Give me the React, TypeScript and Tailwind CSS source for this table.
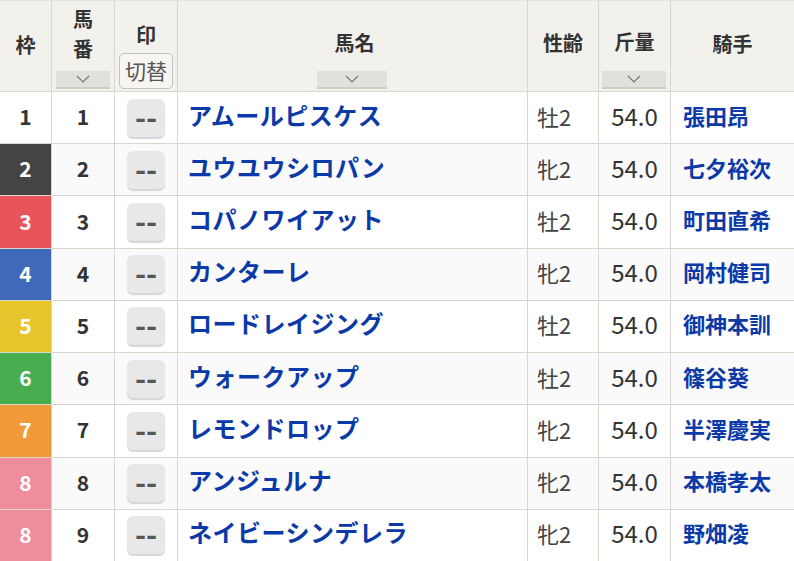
import React from "react";

type Row = { waku: number; uma: number; name: string; sex: string; kin: string; jockey: string };

const rows: Row[] = [
  { waku: 1, uma: 1, name: "アムールピスケス", sex: "牡2", kin: "54.0", jockey: "張田昂" },
  { waku: 2, uma: 2, name: "ユウユウシロパン", sex: "牝2", kin: "54.0", jockey: "七夕裕次" },
  { waku: 3, uma: 3, name: "コパノワイアット", sex: "牡2", kin: "54.0", jockey: "町田直希" },
  { waku: 4, uma: 4, name: "カンターレ", sex: "牝2", kin: "54.0", jockey: "岡村健司" },
  { waku: 5, uma: 5, name: "ロードレイジング", sex: "牡2", kin: "54.0", jockey: "御神本訓" },
  { waku: 6, uma: 6, name: "ウォークアップ", sex: "牡2", kin: "54.0", jockey: "篠谷葵" },
  { waku: 7, uma: 7, name: "レモンドロップ", sex: "牝2", kin: "54.0", jockey: "半澤慶実" },
  { waku: 8, uma: 8, name: "アンジュルナ", sex: "牝2", kin: "54.0", jockey: "本橋孝太" },
  { waku: 8, uma: 9, name: "ネイビーシンデレラ", sex: "牝2", kin: "54.0", jockey: "野畑凌" },
];

const wakuClass: Record<number, string> = {
  1: "bg-white text-[#333]",
  2: "bg-[#444444] text-white",
  3: "bg-[#e9545a] text-white",
  4: "bg-[#4069b9] text-white",
  5: "bg-[#e8c42d] text-white",
  6: "bg-[#48ad4e] text-white",
  7: "bg-[#f09a39] text-white",
  8: "bg-[#f08d9d] text-white",
};

function Chevron() {
  return (
    <svg width="14" height="8" viewBox="0 0 14 8" fill="none">
      <path d="M1 1 L7 7 L13 1" stroke="#777" strokeWidth="1.2" />
    </svg>
  );
}

function SortBar({ w }: { w: string }) {
  return (
    <div className={`${w} h-[18px] bg-[#e2e0db] border-b-2 border-[#cfccc5] flex items-center justify-center`}>
      <Chevron />
    </div>
  );
}

const th = "bg-[#f2f1ec] border-b border-r border-[#d8d6cf] text-[#333] font-bold text-[20px] leading-none";
const td = "border-b border-r border-[#d8d6cf]";

export default function App() {
  return (
    <div
      className="w-[794px] h-[561px] overflow-hidden bg-white"
      style={{ fontFamily: '"Noto Sans CJK JP", "Noto Sans", sans-serif' }}
    >
      <div className="grid grid-cols-[52px_63px_63px_350px_71px_72px_123px] grid-rows-[91px_repeat(9,52.22px)] border-t border-[#e4e2dc]">
        <div className={`${th} flex items-center justify-center pb-[3px]`}>枠</div>
        <div className={`${th} flex flex-col items-center justify-end pb-[2px]`}>
          <div className="mb-[10px]">馬</div>
          <div className="mb-[12px]">番</div>
          <SortBar w="w-[54px]" />
        </div>
        <div className={`${th} flex flex-col items-center justify-end pb-[2px]`}>
          <div className="mb-[8px]">印</div>
          <div className="w-[54px] h-[36px] border border-[#c4c2bc] rounded-[5px] bg-[#f7f6f2] flex items-center justify-center text-[21px] font-normal text-[#555] pb-[2px]">
            切替
          </div>
        </div>
        <div className={`${th} relative flex items-center justify-center pl-[4px]`}>
          <span className="-mt-[6px]">馬名</span>
          <div className="absolute left-[139px] bottom-[2px]">
            <SortBar w="w-[70px]" />
          </div>
        </div>
        <div className={`${th} flex items-center justify-center pb-[6px]`}>性齢</div>
        <div className={`${th} relative flex items-center justify-center`}>
          <span className="-mt-[8px]">斤量</span>
          <div className="absolute left-[3px] bottom-[2px]">
            <SortBar w="w-[64px]" />
          </div>
        </div>
        <div className={`${th} border-r-0 flex items-center justify-center pb-[4px]`}>騎手</div>

        {rows.map((r, i) => {
          const bg = i % 2 === 1 ? "bg-[#fafafa]" : "bg-white";
          return (
            <React.Fragment key={r.uma}>
              <div className={`${td} ${wakuClass[r.waku]} flex items-center justify-center pb-[2px] font-bold text-[21px] leading-none`}>
                {r.waku}
              </div>
              <div className={`${td} ${bg} flex items-center justify-center pb-[2px] font-bold text-[21px] leading-none text-[#333]`}>
                {r.uma}
              </div>
              <div className={`${td} ${bg} flex items-center justify-center`}>
                <div className="w-[38px] h-[38px] rounded-[6px] bg-[#e8e8e8] shadow-[0_2px_1px_#d6d6d6] flex items-center justify-center text-[#555] font-bold text-[30px] leading-none pb-[4px]">
                  --
                </div>
              </div>
              <div className={`${td} ${bg} flex items-center pl-[10px] pb-[6px] text-[#0b3aa8] font-bold text-[24px] tracking-[0.5px] leading-none`}>
                {r.name}
              </div>
              <div className={`${td} ${bg} flex items-center pl-[9px] pb-[4px] text-[#444] text-[22px] leading-none`}>
                {r.sex}
              </div>
              <div className={`${td} ${bg} flex items-center justify-center pb-[4px] text-[#333] text-[24px] leading-none`}>
                {r.kin}
              </div>
              <div className={`${td} ${bg} border-r-0 flex items-center pl-[12px] pb-[6px] text-[#0b3aa8] font-bold text-[22px] leading-none`}>
                {r.jockey}
              </div>
            </React.Fragment>
          );
        })}
      </div>
    </div>
  );
}
